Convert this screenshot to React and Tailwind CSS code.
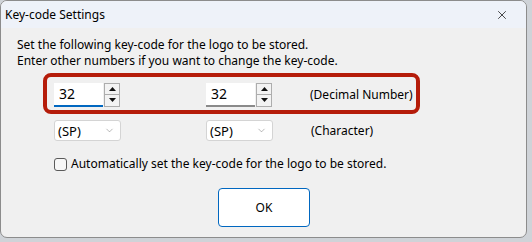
import { ChevronDown, X } from "lucide-react"

function Spin({ value, underline }) {
  return (
    <div className="flex items-stretch h-[24px]">
      <div className={`w-[49px] bg-white flex items-center pl-[5px] text-[14px] text-black border-b-2 ${underline ? "border-[#0067c0]" : "border-[#8a8a8a] border-b"}`}>
        {value}
      </div>
      <div className="ml-[1px] w-[16px] flex flex-col border border-[#adadad] bg-[#f3f3f3]">
        <div className="flex-1 flex items-center justify-center border-b border-[#adadad]">
          <svg width="7" height="4" viewBox="0 0 7 4"><path d="M0 4 L3.5 0 L7 4 Z" fill="#111" /></svg>
        </div>
        <div className="flex-1 flex items-center justify-center">
          <svg width="7" height="4" viewBox="0 0 7 4"><path d="M0 0 L3.5 4 L7 0 Z" fill="#111" /></svg>
        </div>
      </div>
    </div>
  )
}

function Combo() {
  return (
    <div className="w-[67px] h-[21px] bg-white border border-[#d4d4d4] rounded-[3px] flex items-center justify-between pl-[3px] pr-[5px] text-[13px] text-black">
      <span>(SP)</span>
      <ChevronDown size={11} strokeWidth={1} className="text-[#666]" />
    </div>
  )
}

export default function App() {
  return (
    <div className="w-[532px] h-[242px] bg-[#cfd3d8] overflow-hidden" style={{ fontFamily: '"Noto Sans", "Open Sans", sans-serif' }}>
      <div className="w-[527px] h-[238px] rounded-[7px] border border-[#8c8c8c] bg-[#f0f0f0] overflow-hidden flex flex-col">
        {/* title bar */}
        <div className="h-[27px] bg-[#eef2f9] flex items-center justify-between pl-[4px] pr-[17px] text-[12px] text-black">
          <span>Key-code Settings</span>
          <X size={14} strokeWidth={1.2} className="text-black" />
        </div>

        <div className="flex flex-col pl-[16px] pt-[9px] text-[12px] text-black leading-[16px]">
          <p>Set the following key-code for the logo to be stored.</p>
          <p>Enter other numbers if you want to change the key-code.</p>

          <div className="ml-[26px] mt-[4px] w-[377px] h-[41px] border-[4px] border-[#b51c0a] rounded-[8px] flex items-center pl-[7px] pt-[2px]">
            <Spin value="32" underline />
            <div className="ml-[86px]">
              <Spin value="32" />
            </div>
            <span className="ml-[38px]">(Decimal Number)</span>
          </div>

          <div className="flex items-center ml-[37px] mt-[6px]">
            <Combo />
            <div className="ml-[85px]"><Combo /></div>
            <span className="ml-[38px]">(Character)</span>
          </div>

          <label className="flex items-center ml-[37px] mt-[15px]">
            <span className="w-[13px] h-[13px] border border-[#5a5a5a] rounded-[3px] bg-[#f7f7f7]" />
            <span className="ml-[4px]">Automatically set the key-code for the logo to be stored.</span>
          </label>

          <div className="flex ml-[201px] mt-[16px]">
            <button className="w-[92px] h-[39px] bg-white border border-[#0067c0] rounded-[4px] text-[12px] text-black">OK</button>
          </div>
        </div>
      </div>
    </div>
  )
}
